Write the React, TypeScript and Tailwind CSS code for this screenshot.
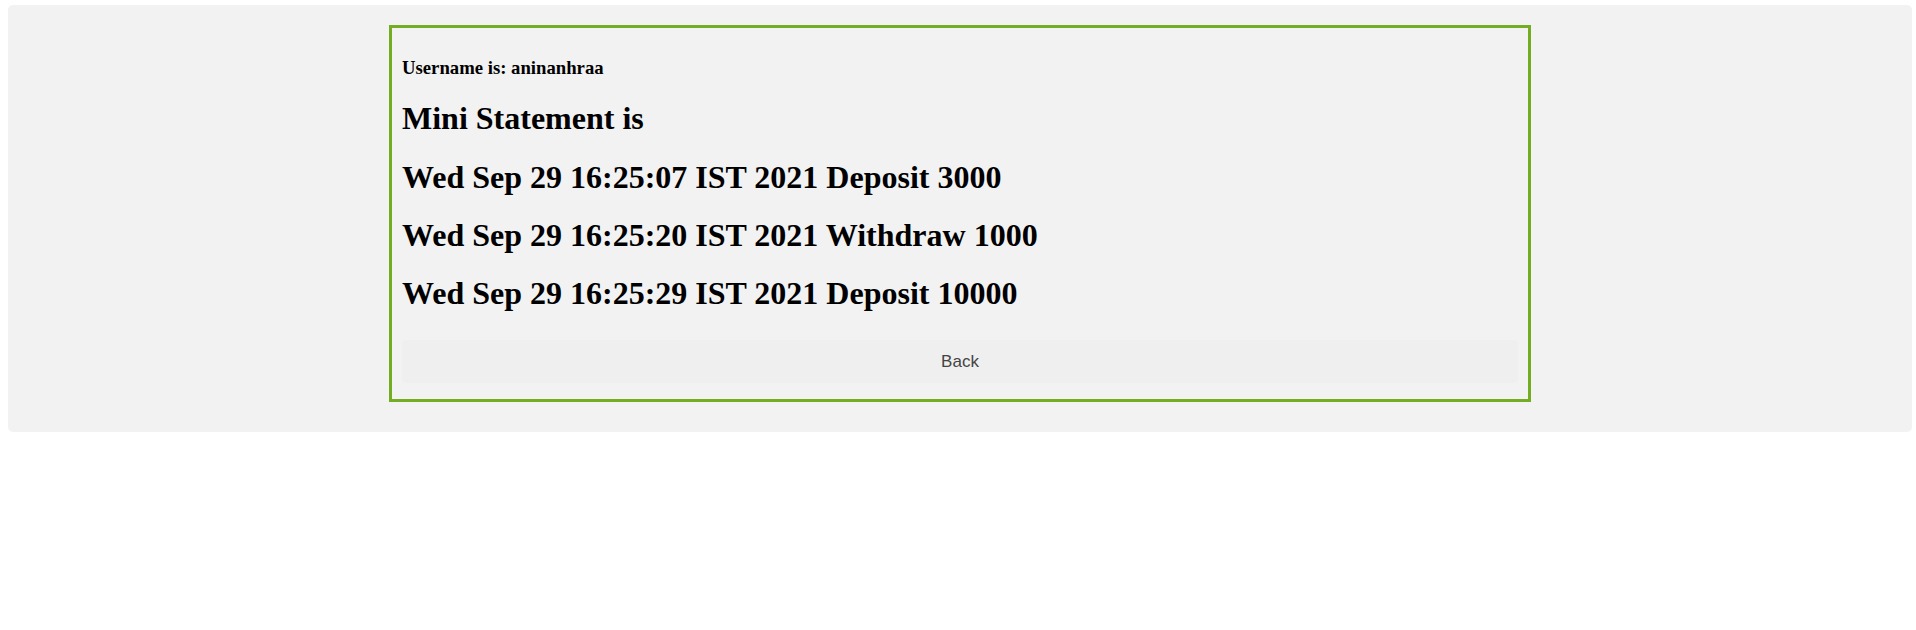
import React from "react";

export default function App() {
  const lines = [
    "Wed Sep 29 16:25:07 IST 2021 Deposit 3000",
    "Wed Sep 29 16:25:20 IST 2021 Withdraw 1000",
    "Wed Sep 29 16:25:29 IST 2021 Deposit 10000",
  ];
  return (
    <div className="min-h-screen bg-white pl-2 pr-1 pt-[5px]">
      <div className="rounded-[5px] bg-[#f2f2f2] px-5 pt-5 pb-[30px]">
        <div className="mx-auto w-[1142px] border-[3px] border-[#73AD21] p-[10px] font-['Liberation_Serif',serif] text-black">
          <h3 className="my-[18.72px] text-[18.72px] font-bold leading-[normal]">
            Username is: aninanhraa
          </h3>
          <h1 className="my-[21.44px] text-[32px] font-bold leading-[normal]">
            Mini Statement is
          </h1>
          {lines.map((l) => (
            <h1 key={l} className="my-[21.44px] text-[32px] font-bold leading-[normal]">
              {l}
            </h1>
          ))}
          <button className="mt-[28px] mb-[6px] block h-[43px] w-full rounded-[4px] bg-[#efefef] font-['Liberation_Sans',Arial,sans-serif] text-[17px] text-[#444]">
            Back
          </button>
        </div>
      </div>
    </div>
  );
}
